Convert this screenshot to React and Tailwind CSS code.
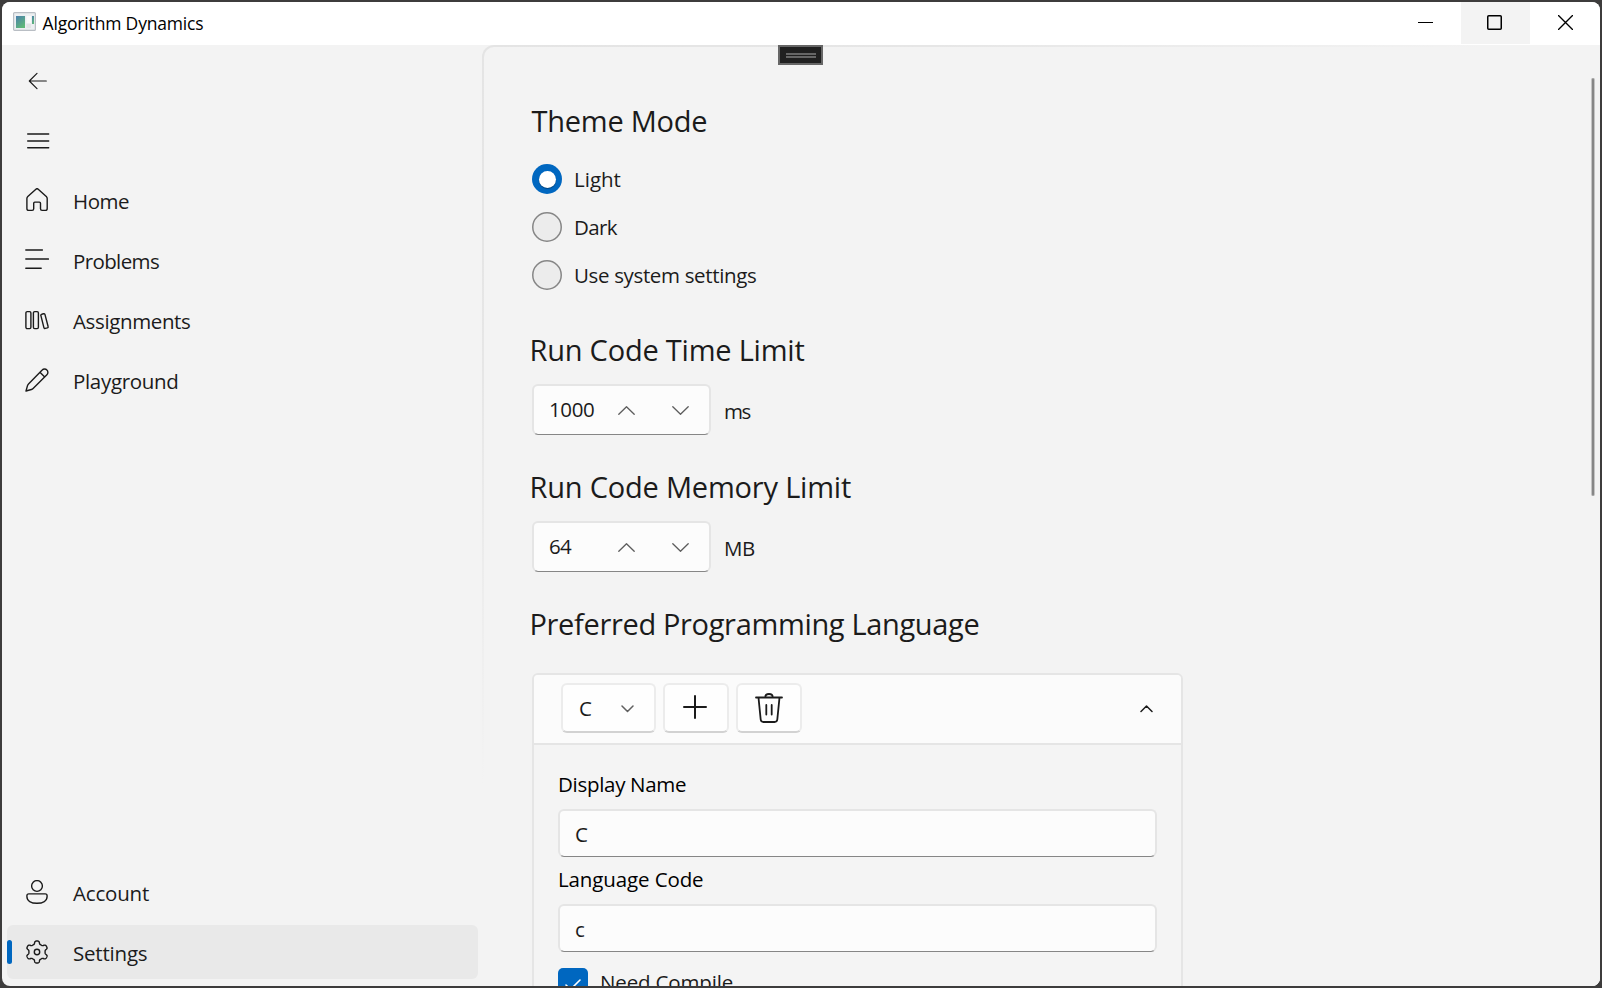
import { useState } from "react";

function gearPath(cx, cy, outer, inner) {
  const points = [];
  for (let i = 0; i < 180; i++) {
    const a = (i / 180) * Math.PI * 2;
    const wave = Math.tanh(2.2 * (Math.cos(6 * (a + Math.PI / 2)) - 0.05)) / Math.tanh(2.2);
    const r = (outer + inner) / 2 + ((outer - inner) / 2) * wave;
    points.push(`${(cx + r * Math.cos(a)).toFixed(2)} ${(cy + r * Math.sin(a)).toFixed(2)}`);
  }
  return `M${points.join("L")}Z`;
}

const GEAR = gearPath(12, 12, 11, 8.1);

function Glyph({ children, className = "size-6", strokeWidth = 1.4, viewBox = "0 0 24 24" }) {
  return (
    <svg
      viewBox={viewBox}
      className={`shrink-0 ${className}`}
      fill="none"
      stroke="currentColor"
      strokeWidth={strokeWidth}
      strokeLinecap="round"
      strokeLinejoin="round"
      aria-hidden="true"
    >
      {children}
    </svg>
  );
}

const icons = {
  home: (
    <Glyph>
      <path d="M10.9 1.2a1.7 1.7 0 0 1 2.3 0l8.1 7.3c.6.6.9 1.2.9 2v10c0 1.1-.8 1.9-1.9 1.9h-3.2c-.9 0-1.6-.7-1.6-1.6v-5.6c0-.7-.4-1.1-1.1-1.1h-4.6c-.7 0-1.1.4-1.1 1.1v5.6c0 .9-.7 1.6-1.6 1.6H3.8c-1.1 0-1.9-.8-1.9-1.9v-10c0-.8.3-1.4.9-2z" />
    </Glyph>
  ),
  problems: (
    <Glyph>
      <path d="M.8 2h16.6M.8 11h22.6M.8 20.2h15.4" />
    </Glyph>
  ),
  assignments: (
    <Glyph>
      <rect x=".9" y="3.6" width="5" height="17" rx="1.3" />
      <rect x="8.4" y="3.6" width="5" height="17" rx="1.3" />
      <path d="m16.7 6.3 1.9-.5c.7-.2 1.2.1 1.4.8l3.1 11.9c.2.7-.1 1.2-.8 1.4l-2 .5c-.7.2-1.2-.1-1.4-.8L15.9 7.7c-.2-.7.1-1.2.8-1.4z" />
    </Glyph>
  ),
  playground: (
    <Glyph>
      <path d="M17.2 2.1a3.2 3.2 0 0 1 4.7 0 3.2 3.2 0 0 1 0 4.6L8.1 20.5c-.5.5-1 .8-1.7 1L1 23l1.5-5.4c.2-.7.5-1.2 1-1.7zM15.2 4.4l4.5 4.5" />
    </Glyph>
  ),
  account: (
    <Glyph>
      <circle cx="12" cy="6" r="5.4" />
      <path d="M3.8 13.9h16.4c1.1 0 1.9.8 1.9 1.9v.7c0 4.4-4.3 6.8-10.1 6.8S1.9 20.9 1.9 16.5v-.7c0-1.1.8-1.9 1.9-1.9z" />
    </Glyph>
  ),
  settings: (
    <Glyph>
      <path d={GEAR} />
      <circle cx="12" cy="12" r="2.7" />
    </Glyph>
  ),
};

const primaryItems = [
  { id: "home", label: "Home", tracking: "tracking-[-0.45px]" },
  { id: "problems", label: "Problems", tracking: "tracking-[-0.62px]" },
  { id: "assignments", label: "Assignments", tracking: "tracking-[-0.37px]" },
  { id: "playground", label: "Playground", tracking: "tracking-[-0.32px]" },
];

const footerItems = [
  { id: "account", label: "Account", tracking: "tracking-[-0.2px]" },
  { id: "settings", label: "Settings", tracking: "tracking-[-0.2px]" },
];

function NavItem({ item, selected, onSelect }) {
  return (
    <button
      onClick={() => onSelect(item.id)}
      className={`my-[3px] flex h-[54px] items-center rounded-md text-left ${selected ? "bg-[#e9e9e9]" : ""}`}
    >
      <span className={`h-6 w-[5px] rounded-full ${selected ? "bg-[#0067c0]" : ""}`} />
      <span className="ml-[13px]">{icons[item.id]}</span>
      <span className={`ml-6 pt-[2px] ${item.tracking}`}>{item.label}</span>
    </button>
  );
}

function TitleBar() {
  return (
    <header className="flex h-[43px] shrink-0 bg-white text-black">
      <div className="flex flex-1 items-start pl-[11px]">
        <svg viewBox="0 0 23 19" className="mt-[10px] h-[19px] w-[23px]" aria-hidden="true">
          <defs>
            <linearGradient id="app-pane" x1="0" y1="0" x2="0.6" y2="1">
              <stop offset="0" stopColor="#4a7fae" />
              <stop offset="1" stopColor="#5fb878" />
            </linearGradient>
          </defs>
          <rect x=".6" y=".6" width="21.8" height="17.8" rx="1" fill="#eceff1" stroke="#b9bec4" strokeWidth="1.2" />
          <rect x="3" y="4" width="9" height="12" fill="url(#app-pane)" />
          <rect x="13.5" y="4" width="4.5" height="7" fill="#fafafa" />
          <rect x="13.5" y="12" width="4.5" height="4" fill="#e2e4e6" />
          <rect x="19" y="4" width="2" height="8" fill="url(#app-pane)" />
        </svg>
        <span className="ml-[6.5px] mt-[7.5px] text-[17.5px] leading-[26px] tracking-[-0.17px]">Algorithm Dynamics</span>
      </div>
      <button aria-label="Minimize" className="flex w-[69px] justify-center pr-[2px] pt-[13px]">
        <svg viewBox="0 0 15 15" className="size-[15px]" shapeRendering="crispEdges" aria-hidden="true">
          <rect y="7" width="15" height="1" fill="#000" />
        </svg>
      </button>
      <button aria-label="Maximize" className="flex h-[42px] w-[69px] justify-center bg-[#f3f3f3] pr-[2px] pt-[13px]">
        <Glyph viewBox="0 0 15 15" className="size-[15px]" strokeWidth={1.5}>
          <rect x=".75" y=".75" width="13.5" height="13.5" rx="1" />
        </Glyph>
      </button>
      <button aria-label="Close" className="flex w-[70px] justify-center pt-[13px]">
        <Glyph viewBox="0 0 15 15" className="size-[15px]" strokeWidth={1.4}>
          <path d="M.5.5l14 14M14.5.5l-14 14" />
        </Glyph>
      </button>
    </header>
  );
}

function Sidebar({ page, onSelect }) {
  return (
    <nav className="flex w-[480px] shrink-0 flex-col pb-1 pl-[5px] pr-1 pt-[5px]">
      <button aria-label="Back" className="flex h-[60px] items-center pl-[18px] pt-[2px]">
        <Glyph strokeWidth={1.2}>
          <path d="M21.3 12H4.3M12 4.3 4.3 12l7.7 7.7" />
        </Glyph>
      </button>
      <button aria-label="Toggle navigation" className="flex h-[60px] items-center pl-[19px] pt-[2px]">
        <Glyph>
          <path d="M1.7 5h21M1.7 12h21M1.7 18.8h21" />
        </Glyph>
      </button>
      {primaryItems.map((item) => (
        <NavItem key={item.id} item={item} selected={page === item.id} onSelect={onSelect} />
      ))}
      <div className="flex-1" />
      {footerItems.map((item) => (
        <NavItem key={item.id} item={item} selected={page === item.id} onSelect={onSelect} />
      ))}
    </nav>
  );
}

const themes = [
  { id: "light", label: "Light", tracking: "" },
  { id: "dark", label: "Dark", tracking: "tracking-[-0.65px]" },
  { id: "system", label: "Use system settings", tracking: "tracking-[-0.35px]" },
];

function ThemeRadios() {
  const [theme, setTheme] = useState("light");
  return (
    <div role="radiogroup" className="mt-3.5 flex flex-col items-start">
      {themes.map(({ id, label, tracking }) => (
        <button key={id} role="radio" aria-checked={theme === id} onClick={() => setTheme(id)} className="flex h-12 items-center">
          {theme === id ? (
            <span className="flex size-[30px] items-center justify-center rounded-full bg-[#0067c0]">
              <span className="size-[17px] rounded-full bg-white shadow-[0_1px_1px_rgba(0,0,0,0.35)]" />
            </span>
          ) : (
            <Glyph viewBox="0 0 30 30" className="size-[30px] text-[#868686]" strokeWidth={1.5}>
              <circle cx="15" cy="15" r="14.25" fill="#ececec" />
            </Glyph>
          )}
          <span className={`ml-3 ${tracking}`}>{label}</span>
        </button>
      ))}
    </div>
  );
}

function NumberBox({ value, unit, tracking, unitTracking }) {
  return (
    <div className="mt-3.5 flex h-[51px] items-center">
      <div className="flex h-full w-[179px] items-center rounded-md border-2 border-[#e5e5e5] border-b-[#868686] bg-[#fcfcfc] [border-bottom-width:1.5px]">
        <span className={`w-[84px] pb-[2px] pl-[15px] ${tracking}`}>{value}</span>
        <button aria-label="Increase" className="text-[#5d5d5d]">
          <Glyph viewBox="0 0 17 9" className="h-[9px] w-[17px]" strokeWidth={1.3}>
            <path d="M.8 8.3 8.5.7l7.7 7.6" />
          </Glyph>
        </button>
        <button aria-label="Decrease" className="ml-[37px] text-[#5d5d5d]">
          <Glyph viewBox="0 0 17 9" className="h-[9px] w-[17px]" strokeWidth={1.3}>
            <path d="M.8.7l7.7 7.6L16.2.7" />
          </Glyph>
        </button>
      </div>
      <span className={`ml-[13px] pt-[2px] ${unitTracking}`}>{unit}</span>
    </div>
  );
}

function TextField({ label, value, tracking }) {
  return (
    <label className="flex flex-col">
      <span className={`h-7 leading-7 text-black ${tracking}`}>{label}</span>
      <span className="mt-[11px] flex h-12 items-center rounded-md border-2 border-[#e5e5e5] border-b-[#868686] bg-[#fcfcfc] pl-[15px] [border-bottom-width:1.5px]">
        {value}
      </span>
    </label>
  );
}

const toolButton =
  "flex h-[50px] items-center rounded-md border-2 border-[#ececec] border-b-[#d2d2d2] bg-[#fefefe]";

function LanguageExpander() {
  return (
    <section className="mt-[29px] w-[651px] rounded-md border-2 border-[#e5e5e5] bg-[#f4f4f4]">
      <div className="flex h-[70px] items-start rounded-t border-b-2 border-[#e5e5e5] bg-[#fbfbfb] pl-[27px] pr-[28px] pt-2">
        <button className={`${toolButton} w-[95px] justify-between pl-[16px] pr-[20.5px]`}>
          <span className="pb-px">C</span>
          <Glyph viewBox="0 0 13 8" className="mt-px h-2 w-[13px] text-[#606060]" strokeWidth={1.5}>
            <path d="M1 1l5.5 5.5L12 1" />
          </Glyph>
        </button>
        <button aria-label="Add language" className={`${toolButton} ml-[7px] w-[66px] justify-center`}>
          <Glyph viewBox="0 0 24 24" className="mb-[2px] mr-[2px] size-6" strokeWidth={2}>
            <path d="M12 1v22M1 12h22" />
          </Glyph>
        </button>
        <button aria-label="Delete language" className={`${toolButton} ml-[7px] w-[66px] justify-center`}>
          <Glyph viewBox="0 0 28 30" className="h-[30px] w-7" strokeWidth={1.8}>
            <path d="M1 4.5h26M10.3 4.3c0-2 1.6-3.3 3.7-3.3s3.7 1.3 3.7 3.3M3.5 4.7 5.7 26.5c.2 1.5 1.2 2.5 2.7 2.5h11.2c1.5 0 2.5-1 2.7-2.5L24.5 4.7M11.3 12v9.5M16.7 12v9.5" />
          </Glyph>
        </button>
        <button aria-label="Collapse" className="ml-auto flex h-[52px] items-center">
          <Glyph viewBox="0 0 13 8" className="h-2 w-[13px]" strokeWidth={1.5}>
            <path d="M1 6.5 6.5 1 12 6.5" />
          </Glyph>
        </button>
      </div>
      <div className="flex flex-col gap-2 px-6 pb-6 pt-[25px]">
        <TextField label="Display Name" value="C" tracking="tracking-[-0.3px]" />
        <TextField label="Language Code" value="c" tracking="tracking-[-0.12px]" />
        <div className="mt-2 flex items-center">
          <span className="flex size-[30px] items-center justify-center rounded-[5px] bg-[#0067c0] text-white">
            <Glyph viewBox="0 0 16 12" className="mt-1 h-3 w-4" strokeWidth={1.6}>
              <path d="M1 6l4.5 4.5L15 1" />
            </Glyph>
          </span>
          <span className="ml-3 h-[30px] leading-7 tracking-[-0.15px]">Need Compile</span>
        </div>
      </div>
    </section>
  );
}

function Heading({ children, className }) {
  return <h2 className={`h-10 text-[29px] leading-10 ${className}`}>{children}</h2>;
}

function SettingsPage() {
  return (
    <main className="min-w-0 flex-1 rounded-tl-xl bg-[radial-gradient(1000px_740px_at_top_left,#e4e4e4_0%,#e6e6e6_45%,#f3f3f3_100%)] pl-[2px] pt-[2px]">
      <div className="flex h-full rounded-tl-[10px] bg-[#f3f3f3]">
        <div className="flex-1 overflow-hidden pl-12 pt-[54px]">
          <Heading className="-ml-[0.5px] tracking-[-0.25px]">Theme Mode</Heading>
          <ThemeRadios />
          <Heading className="-ml-[2.5px] mt-[31px] tracking-[-0.22px]">Run Code Time Limit</Heading>
          <NumberBox value="1000" unit="ms" tracking="tracking-[-0.4px]" unitTracking="tracking-[-1.4px]" />
          <Heading className="-ml-[2.5px] mt-8 tracking-[-0.2px]">Run Code Memory Limit</Heading>
          <NumberBox value="64" unit="MB" tracking="tracking-[-0.6px]" unitTracking="tracking-[-0.5px]" />
          <Heading className="-ml-[2.5px] mt-8 tracking-[-0.34px]">Preferred Programming Language</Heading>
          <LanguageExpander />
        </div>
        <div className="w-[9px] pt-[31px]">
          <div className="h-[418px] w-1 rounded-full border-x border-[#c4c4c4] bg-[#868686]" />
        </div>
      </div>
    </main>
  );
}

export default function App() {
  const [page, setPage] = useState("settings");
  return (
    <div className="h-screen overflow-hidden bg-[#3d3c3c] p-[2px] font-['Open_Sans','Noto_Sans',sans-serif] text-[20.5px] leading-7 text-[#1b1b1b]">
      <div className="relative flex h-full flex-col overflow-hidden rounded-lg bg-[#f3f3f3]">
        <TitleBar />
        <div className="flex min-h-0 flex-1">
          <Sidebar page={page} onSelect={setPage} />
          <SettingsPage />
        </div>
        <div className="absolute left-[776px] top-[43px] flex h-5 w-[45px] flex-col items-center justify-center gap-px border-2 border-[#666666] bg-[#202020]">
          <div className="h-[2px] w-[30px] bg-[#666666]" />
          <div className="h-[2px] w-[30px] bg-[#666666]" />
        </div>
      </div>
    </div>
  );
}
